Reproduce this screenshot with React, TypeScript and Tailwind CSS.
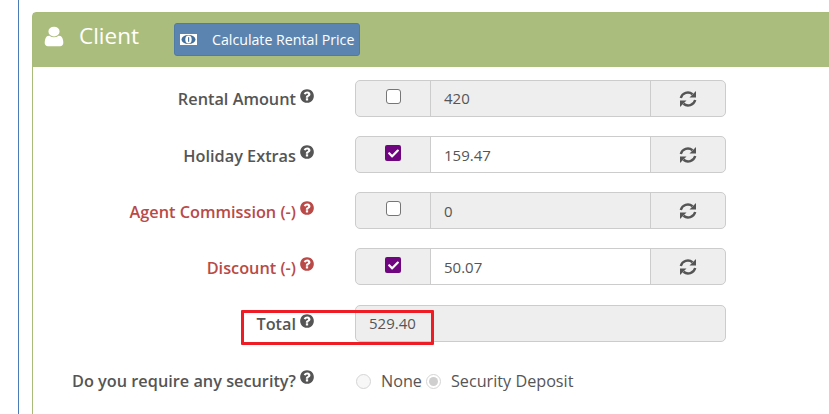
import { FaCheck } from "react-icons/fa";

// font awesome 4 glyphs, the package only ships the v5 shapes
const userPath =
  "M1536 1399q0 109-62.500 187t-150.500 78h-854q-88 0-150.500-78t-62.500-187q0-85 8.500-160.500t31.500-152 58.500-131 94-89 134.500-34.500q131 128 313 128t313-128q76 0 134.500 34.500t94 89 58.500 131 31.500 152 8.500 160.500zm-256-887q0 159-112.500 271.500t-271.500 112.500-271.500-112.500-112.500-271.500 112.500-271.500 271.500-112.500 271.500 112.500 112.500 271.500z";
const questionPath =
  "M1024 1376v-192q0-14-9-23t-23-9h-192q-14 0-23 9t-9 23v192q0 14 9 23t23 9h192q14 0 23-9t9-23zm256-672q0-88-55.500-163t-138.500-116-170-41q-243 0-371 213-15 24 8 42l132 100q7 6 19 6 16 0 25-12 53-68 86-92 34-24 86-24 48 0 85.500 26t37.500 59q0 38-20 61t-68 45q-63 28-115.500 86.500t-52.500 125.500v36q0 14 9 23t23 9h192q14 0 23-9t9-23q0-19 21.500-49.500t54.500-49.500q32-18 49-28.500t46-35 44.500-48 28-60.500 12.500-81zm384 192q0 209-103 385.500t-279.500 279.500-385.500 103-385.500-103-279.500-279.500-103-385.500 103-385.500 279.500-279.500 385.500-103 385.500 103 279.500 279.500 103 385.500z";

function Glyph({ d, className }: { d: string; className: string }) {
  return (
    <svg viewBox="0 0 1792 1792" fill="currentColor" preserveAspectRatio="none" className={className}>
      <path d={d} />
    </svg>
  );
}

function RefreshIcon() {
  return (
    <svg viewBox="0 0 18 18" className="w-[18px] h-[18px]" fill="currentColor">
      <path d="M1.800 8A7.300 7.300 0 0 1 13.500 4.200" fill="none" stroke="currentColor" strokeWidth="2.400" />
      <path d="M17 1v6.500h-6.500z" />
      <path d="M16.200 10A7.300 7.300 0 0 1 4.500 13.800" fill="none" stroke="currentColor" strokeWidth="2.400" />
      <path d="M1 17v-6.500h6.500z" />
    </svg>
  );
}

function MoneyIcon() {
  return (
    <svg viewBox="0 0 17 11" className="w-[17px] h-[11px] shrink-0">
      <rect width="17" height="11" fill="#ffffff" />
      <ellipse cx="8.500" cy="5.500" rx="7" ry="4.500" fill="#45709c" />
      <ellipse cx="8.500" cy="5.500" rx="3.200" ry="4" fill="#ffffff" />
      <rect x="8" y="3.200" width="1.200" height="4.600" fill="#45709c" />
    </svg>
  );
}

const rows = [
  { label: "Rental Amount", value: "420", checked: false, danger: false },
  { label: "Holiday Extras", value: "159.47", checked: true, danger: false },
  { label: "Agent Commission (-)", value: "0", checked: false, danger: true },
  { label: "Discount (-)", value: "50.07", checked: true, danger: true },
];

function FieldLabel({ label, danger, raised }: { label: string; danger?: boolean; raised?: boolean }) {
  return (
    <div
      className={`w-[282px] shrink-0 flex justify-end items-start gap-[3px] text-[16.3px] leading-[24px] font-semibold ${
        danger ? "text-[#b94a48]" : "text-[#555555]"
      }`}
    >
      <span className={`whitespace-nowrap ${raised ? "mt-[7px]" : "mt-[8px]"}`}>{label}</span>
      <Glyph d={questionPath} className="mt-[8px] w-[16px] h-[16px] shrink-0" />
    </div>
  );
}

function Row({ label, value, checked, danger, first }: (typeof rows)[number] & { first: boolean }) {
  return (
    <div className="flex h-[37px] mb-[19px]">
      <FieldLabel label={label} danger={danger} raised={first} />
      <div className="ml-[40px] w-[371px] h-[37px] flex rounded-[5px] border border-[#cccccc] bg-[#eeeeee] overflow-hidden text-[15px] text-[#555555]">
        <div className="w-[75px] shrink-0 flex justify-center pt-[8px] border-r border-[#cccccc]">
          {checked ? (
            <span className="w-[16px] h-[16px] rounded-[2px] bg-[#6f0680] flex items-center justify-center">
              <FaCheck className="w-[11px] h-[11px] text-white" />
            </span>
          ) : (
            <span className="w-[15px] h-[15px] rounded-[3px] border border-[#767676] bg-white" />
          )}
        </div>
        <div className={`flex-1 pl-[13px] ${first ? "leading-[35px]" : "leading-[37px]"} ${checked ? "bg-white" : ""}`}>
          {value}
        </div>
        <div className="w-[75px] shrink-0 flex items-center justify-center border-l border-[#cccccc]">
          <RefreshIcon />
        </div>
      </div>
    </div>
  );
}

export default function App() {
  return (
    <div className="relative w-[829px] h-[414px] overflow-hidden bg-white font-['Open_Sans',sans-serif]">
      <div className="h-full ml-[18px] pl-[13px] pt-[12px] border-l border-[#4a7db5]">
        <div className="w-[820px] h-[420px] rounded-t-[4px] border border-[#a9bb79]">
          <div className="h-[54px] bg-[#abbd7c] flex items-start pl-[8px] text-white">
            <Glyph d={userPath} className="mt-[12px] w-[26px] h-[23px]" />
            <span className="ml-[12px] mt-[5px] text-[22.5px] leading-[36px]">Client</span>
            <button className="ml-[35px] mt-[10px] w-[186px] h-[33px] rounded-[3px] border border-[#4f7ba6] bg-[#5b85b0] flex items-center pl-[5px] text-[14.2px] text-white">
              <MoneyIcon />
              <span className="ml-[15px] whitespace-nowrap">Calculate Rental Price</span>
            </button>
          </div>
          <div className="pt-[13px] flex flex-col">
            {rows.map((row, i) => (
              <Row key={row.label} {...row} first={i === 0} />
            ))}
            <div className="flex h-[37px] mb-[19px] mt-[1px]">
              <FieldLabel label="Total" raised />
              <div className="ml-[40px] w-[371px] h-[37px] rounded-[5px] border border-[#cccccc] bg-[#eeeeee] pl-[13px] leading-[35px] text-[15px] text-[#555555]">
                529.40
              </div>
            </div>
            <div className="flex h-[37px]">
              <FieldLabel label="Do you require any security?" />
              <div className="ml-[40px] flex items-center h-[37px] text-[16.2px] text-[#555555] mt-[2px]">
                <span className="w-[15px] h-[15px] rounded-full border border-[#d5d5d5] bg-[#f7f7f7] ml-[1px]" />
                <span className="ml-[10px]">None</span>
                <span className="ml-[4px] w-[15px] h-[15px] rounded-full border border-[#d5d5d5] bg-white flex items-center justify-center">
                  <span className="w-[9px] h-[9px] rounded-full bg-[#cfcfcf]" />
                </span>
                <span className="ml-[10px]">Security Deposit</span>
              </div>
            </div>
          </div>
        </div>
      </div>
      <div className="absolute left-[241px] top-[310px] w-[193px] h-[35px] border-[3px] border-[#ee1c25] rounded-[1px]" />
    </div>
  );
}
